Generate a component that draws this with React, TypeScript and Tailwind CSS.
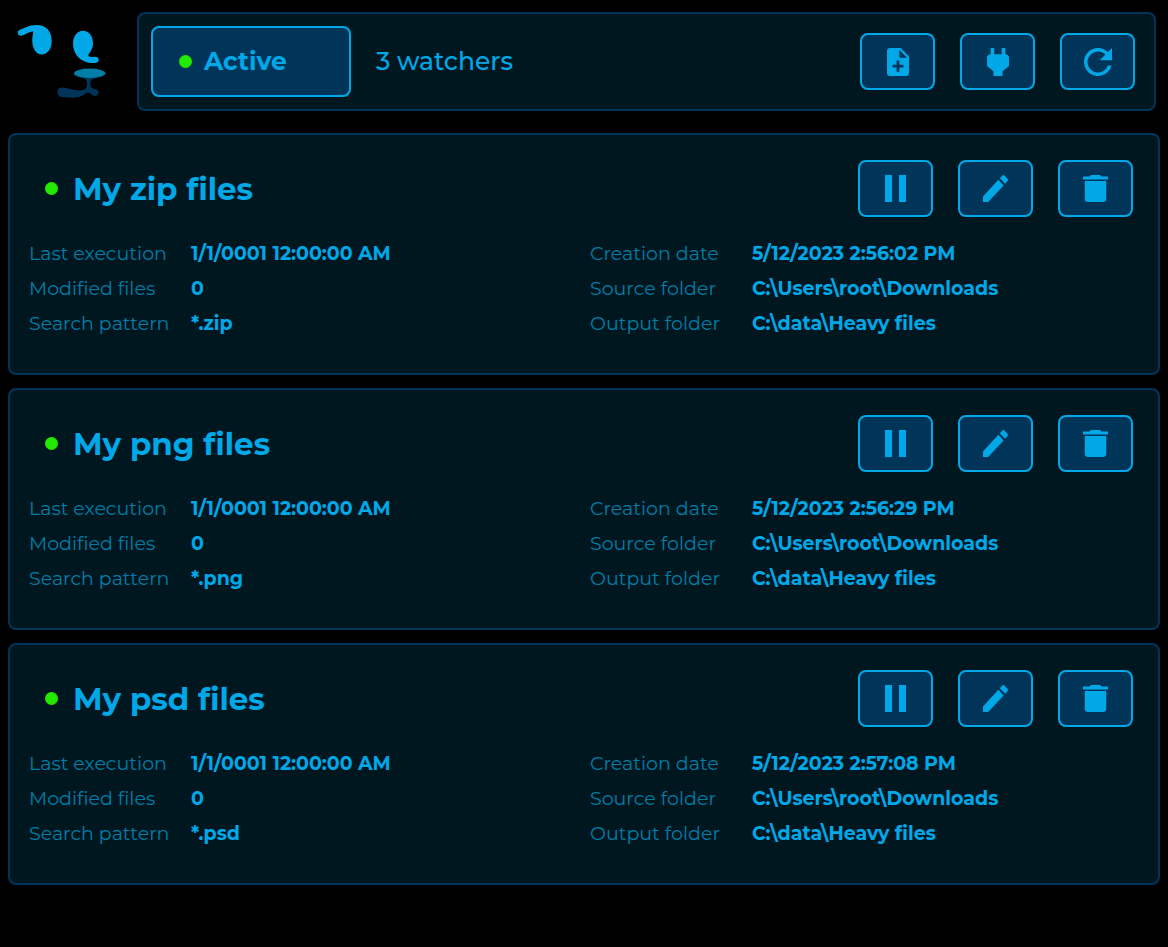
import type { ButtonHTMLAttributes } from "react";

type IconShape = { viewBox: string; d: string; size: string };

const icons = {
  add: {
    viewBox: "4 2 16 20",
    size: "w-[22px] h-7",
    d: "M14 2H6c-1.1 0-2 .9-2 2v16c0 1.1.9 2 2 2h12c1.1 0 2-.9 2-2V8l-6-6zm2 14h-3v3h-2v-3H8v-2h3v-3h2v3h3v2zm-3-7V3.500L18.500 9H13z",
  },
  plug: {
    viewBox: "6 3 12 18",
    size: "w-[22px] h-7",
    d: "M16 7V3h-2v4h-4V3H8v4C7 7 6 8 6 9v5.500L9.500 18v3h5v-3l3.500-3.500V9c0-1-1-2-2-2z",
  },
  refresh: {
    viewBox: "4 4 16 16",
    size: "w-7 h-7",
    d: "M17.650 6.350C16.200 4.900 14.210 4 12 4a8 8 0 1 0 7.730 10h-2.080A6 6 0 1 1 12 6c1.660 0 3.140.69 4.220 1.780L13 11h7V4l-2.350 2.350z",
  },
  pause: {
    viewBox: "6 5 12 14",
    size: "w-[21px] h-[27px]",
    d: "M14 19h4V5h-4M6 19h4V5H6v14z",
  },
  edit: {
    viewBox: "3 3 18 18",
    size: "w-[25px] h-[27px]",
    d: "M20.710 7.040c.39-.39.39-1.040 0-1.410l-2.340-2.340c-.37-.39-1.020-.39-1.410 0l-1.840 1.830 3.750 3.750M3 17.250V21h3.750L17.810 9.930l-3.750-3.750L3 17.250z",
  },
  trash: {
    viewBox: "5 3 14 18",
    size: "w-[25px] h-[27px]",
    d: "M19 4h-3.500l-1-1h-5l-1 1H5v2h14M6 19a2 2 0 0 0 2 2h8a2 2 0 0 0 2-2V7H6v12z",
  },
} satisfies Record<string, IconShape>;

type IconButtonProps = ButtonHTMLAttributes<HTMLButtonElement> & {
  icon: keyof typeof icons;
  label: string;
};

function IconButton({ icon, label, ...rest }: IconButtonProps) {
  const { viewBox, d, size } = icons[icon];
  return (
    <button
      type="button"
      aria-label={label}
      className="flex h-[57px] w-[75px] items-center justify-center rounded-lg border-2 border-[#00a8e8] bg-[#003459] hover:bg-[#00426f]"
      {...rest}
    >
      <svg viewBox={viewBox} preserveAspectRatio="none" className={size} fill="currentColor" aria-hidden="true">
        <path d={d} />
      </svg>
    </button>
  );
}

function StatusDot() {
  return <span className="size-[13px] shrink-0 rounded-full bg-[#22e900]" />;
}

function Logo() {
  return (
    <svg viewBox="8 2 129 99" className="h-[99px] w-[129px] shrink-0" aria-hidden="true">
      <path
        fill="#00a8e8"
        d="M18.500 20.500C17 22.500 17.800 25.500 20.500 25.800C25 25.500 28.500 21.500 33 21.500C33.700 23 32 26 32.300 32C32.800 39 36.500 44.500 41.500 44.500C47.500 44.500 51.700 39 51.700 31C51.700 21 46 15 36.500 15C29 15 25 18.300 20 19.700Z"
      />
      <path
        fill="#00a8e8"
        d="M83 20.700C77 20.700 73 26.500 73 33.500C73 42 78 49.500 86 52C89 53 93 53.200 96 52.800C99.500 52.200 99.500 47 96.300 46.900C94 46.700 89.500 47.700 88.300 45.500C88 43.500 93 40.500 93 33.500C93 26 89 20.700 83 20.700Z"
      />
      <path
        fill="#003459"
        d="M74 64C76 68.500 86.500 66.500 87 72C87.300 76 86.500 79.500 82.500 80C76 81.500 68 78 62 77.500C58.500 77.500 57.600 80 57.600 82.500C57.600 85.500 59.500 86.800 62.500 87C70 87.800 79 88.800 85 84C88 81.300 89.500 82.500 91 84C93.500 87 98.500 86.500 98.500 82.500C98.500 78.500 93.500 80 91.500 77.500C90 75 90 71 92 69.500C96 67 103 68 105 64Z"
      />
      <ellipse cx="89.700" cy="63.300" rx="15.700" ry="4.700" fill="#007ea7" />
    </svg>
  );
}

type Watcher = { name: string; created: string; pattern: string };

const watchers: Watcher[] = [
  { name: "My zip files", created: "5/12/2023 2:56:02 PM", pattern: "*.zip" },
  { name: "My png files", created: "5/12/2023 2:56:29 PM", pattern: "*.png" },
  { name: "My psd files", created: "5/12/2023 2:57:08 PM", pattern: "*.psd" },
];

function Details({ rows }: { rows: [string, string][] }) {
  return (
    <dl className="grid grid-cols-[162px_1fr] text-[19px] leading-[35px]">
      {rows.map(([label, value]) => (
        <div key={label} className="contents">
          <dt className="whitespace-nowrap text-[#007ea7]">{label}</dt>
          <dd className="font-bold whitespace-nowrap">{value}</dd>
        </div>
      ))}
    </dl>
  );
}

function WatcherCard({ watcher }: { watcher: Watcher }) {
  return (
    <article className="rounded-lg border-2 border-[#003459] bg-[#00171f] pt-[25px] pb-8">
      <header className="flex items-center pr-[25px] pl-[35px]">
        <StatusDot />
        <h2 className="ml-[15px] flex-1 text-[31px] leading-10 font-bold">{watcher.name}</h2>
        <div className="flex gap-[25px]">
          <IconButton icon="pause" label={`Pause ${watcher.name}`} />
          <IconButton icon="edit" label={`Edit ${watcher.name}`} />
          <IconButton icon="trash" label={`Delete ${watcher.name}`} />
        </div>
      </header>
      <div className="mt-[19px] grid grid-cols-2 pr-[7px] pl-[19px]">
        <Details
          rows={[
            ["Last execution", "1/1/0001 12:00:00 AM"],
            ["Modified files", "0"],
            ["Search pattern", watcher.pattern],
          ]}
        />
        <Details
          rows={[
            ["Creation date", watcher.created],
            ["Source folder", "C:\\Users\\root\\Downloads"],
            ["Output folder", "C:\\data\\Heavy files"],
          ]}
        />
      </div>
    </article>
  );
}

export default function App() {
  return (
    <div className="min-h-screen bg-black px-2 pt-3 pb-8 font-[Montserrat,Inter,sans-serif] text-[#00a8e8]">
      <header className="flex items-center pr-1">
        <Logo />
        <div className="flex flex-1 items-center rounded-lg border-2 border-[#003459] bg-[#00171f] py-3 pr-[19px] pl-3">
          <button
            type="button"
            className="flex h-[71px] w-[200px] items-center gap-3 rounded-lg border-2 border-[#00a8e8] bg-[#003459] pl-[26px] text-[25px] font-bold"
          >
            <StatusDot />
            Active
          </button>
          <p className="ml-[25px] flex-1 text-[25px] font-medium">{watchers.length} watchers</p>
          <div className="flex gap-[25px]">
            <IconButton icon="add" label="Add watcher" />
            <IconButton icon="plug" label="Toggle connection" />
            <IconButton icon="refresh" label="Refresh" />
          </div>
        </div>
      </header>
      <main className="mt-[22px] flex flex-col gap-[13px]">
        {watchers.map((watcher) => (
          <WatcherCard key={watcher.name} watcher={watcher} />
        ))}
      </main>
    </div>
  );
}
